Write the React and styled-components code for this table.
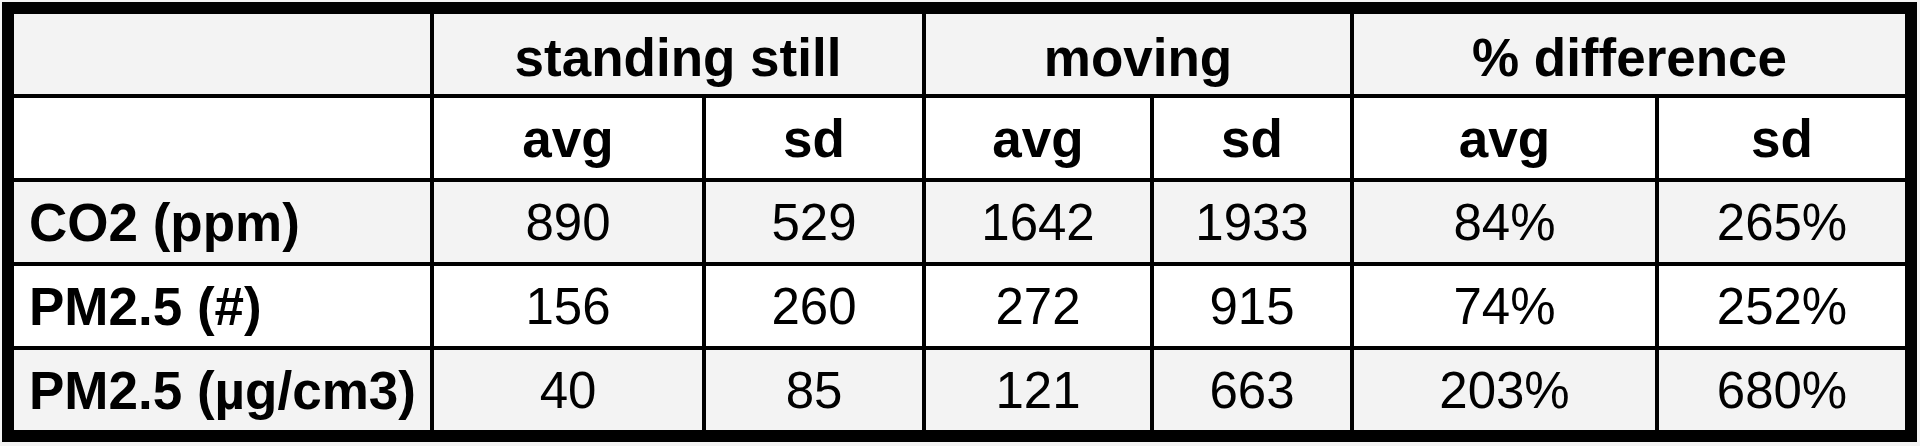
import styled, { createGlobalStyle } from "styled-components";

const GlobalStyle = createGlobalStyle`
  body {
    margin: 2px;
    background-color: #f3f3f3;
    font-family: "Liberation Sans", Arial, sans-serif;
  }
`;

const Table = styled.div`
  display: grid;
  grid-template-columns: 416px 268px 216px 224px 196px 301px 246px;
  grid-auto-rows: 80px;
  gap: 4px;
  padding: 12px;
  width: max-content;
  background-color: #000;
`;

const Cell = styled.div`
  display: flex;
  align-items: center;
  justify-content: ${(p) => (p.$label ? "flex-start" : "center")};
  grid-column: span ${(p) => p.$span || 1};
  padding-top: ${(p) => (p.$top ? "6px" : "0")};
  padding-left: ${(p) => (p.$label ? "15px" : "0")};
  background-color: ${(p) => (p.$shade ? "#f3f3f3" : "#ffffff")};
  color: #000;
  font-size: ${(p) => (p.$bold ? "53px" : "51px")};
  font-weight: ${(p) => (p.$bold ? 700 : 400)};
  white-space: nowrap;
`;

const rows = [
  { label: "CO2 (ppm)", values: ["890", "529", "1642", "1933", "84%", "265%"] },
  { label: "PM2.5 (#)", values: ["156", "260", "272", "915", "74%", "252%"] },
  { label: "PM2.5 (µg/cm3)", values: ["40", "85", "121", "663", "203%", "680%"] },
];

const groups = ["standing still", "moving", "% difference"];

export default function App() {
  return (
    <>
      <GlobalStyle />
      <Table>
        <Cell $shade $top />
        {groups.map((g) => (
          <Cell key={g} $shade $bold $top $span={2}>
            {g}
          </Cell>
        ))}

        <Cell />
        {groups.map((g) => [
          <Cell key={g + "avg"} $bold>avg</Cell>,
          <Cell key={g + "sd"} $bold>sd</Cell>,
        ])}

        {rows.map((row, i) => {
          const shade = i % 2 === 0;
          return [
            <Cell key={row.label} $label $bold $shade={shade}>
              {row.label}
            </Cell>,
            ...row.values.map((v, j) => (
              <Cell key={row.label + j} $shade={shade}>
                {v}
              </Cell>
            )),
          ];
        })}
      </Table>
    </>
  );
}
